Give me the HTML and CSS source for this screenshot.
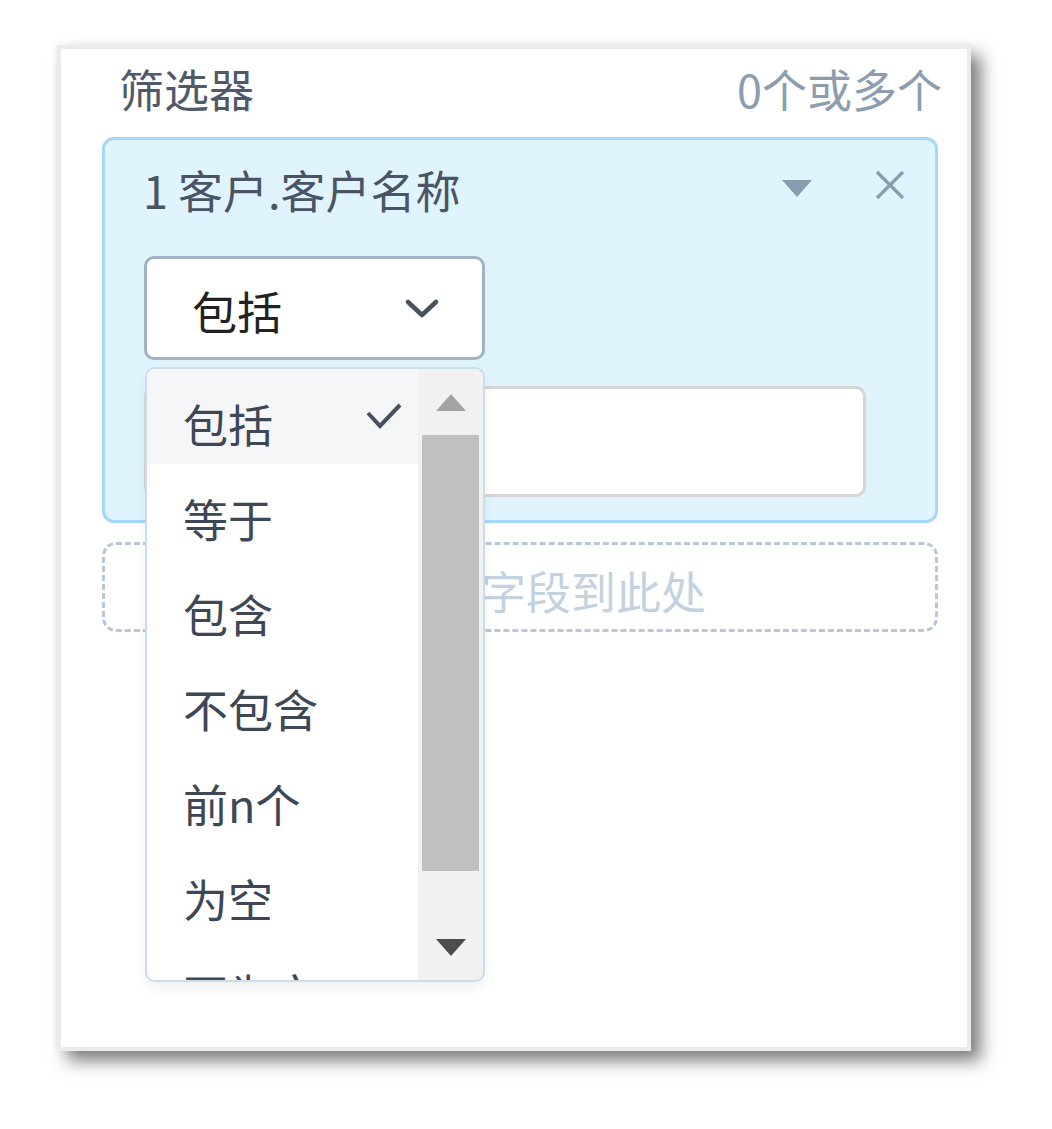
FILE: index.html
```html
<!DOCTYPE html>
<html lang="zh-CN">
<head>
<meta charset="utf-8">
<link rel="stylesheet" href="styles.css">
</head>
<body>
<div class="frame">
  <div class="title-row">
    <span class="title">筛选器</span>
    <span class="count">0个或多个</span>
  </div>
  <div class="card">
    <div class="card-head">
      <span class="field">1 客户.客户名称</span>
      <svg class="caret" width="30" height="17" viewBox="0 0 30 17"><path d="M0 0H30L15 17Z" fill="#8c9cb0"/></svg>
      <svg class="close" width="30" height="30" viewBox="0 0 30 30"><path d="M2 2L28 28M28 2L2 28" stroke="#8c9cb0" stroke-width="3.2" fill="none"/></svg>
    </div>
    <div class="select-wrap">
      <div class="select">
        <span class="select-text">包括</span>
        <svg width="34" height="22" viewBox="0 0 34 22"><path d="M3 4L17 17L31 4" fill="none" stroke="#48515e" stroke-width="4.5" stroke-linecap="round" stroke-linejoin="round"/></svg>
      </div>
      <div class="popup">
        <div class="list">
          <div class="opt active"><span>包括</span><svg width="36" height="27" viewBox="0 0 36 27"><path d="M2 10L14 23L34 2" fill="none" stroke="#48515e" stroke-width="4"/></svg></div>
          <div class="opt"><span>等于</span></div>
          <div class="opt"><span>包含</span></div>
          <div class="opt"><span>不包含</span></div>
          <div class="opt"><span>前n个</span></div>
          <div class="opt"><span>为空</span></div>
          <div class="opt"><span>不为空</span></div>
        </div>
        <div class="sbar">
          <div class="sbtn"><svg width="30" height="17" viewBox="0 0 30 17"><path d="M0 17H30L15 0Z" fill="#a3a3a3"/></svg></div>
          <div class="track"><div class="thumb"></div></div>
          <div class="sbtn"><svg width="30" height="17" viewBox="0 0 30 17"><path d="M0 0H30L15 17Z" fill="#4d4d4d"/></svg></div>
        </div>
      </div>
    </div>
    <div class="input"></div>
  </div>
  <div class="drop">拖拽字段到此处</div>
</div>
</body>
</html>
```
FILE: styles.css
```css
* { box-sizing: border-box; }
html, body { margin: 0; padding: 0; background: #fff; }
body {
  font-family: "Noto Sans CJK SC", "Noto Sans", sans-serif;
  font-size: 45px;
  min-height: 1129px;
  padding: 45px 0 0 57px;
}
.frame {
  width: 914px;
  height: 1006px;
  background: #fff;
  border: 4px solid #ebebeb;
  box-shadow: 10px 10px 16px rgba(0,0,0,0.5), 0 0 6px rgba(0,0,0,0.06);
  padding-top: 12px;
}
.title-row {
  height: 60px;
  margin: 0 25px 0 58px;
  display: flex;
  justify-content: space-between;
  align-items: center;
  line-height: 60px;
}
.title { color: #4f5967; margin-top: -4px; }
.count { color: #8d9db0; margin-top: -4px; }
.card {
  margin: 16px 29px 0 41px;
  background: #dff4fd;
  border: 3px solid #a3d9f5;
  border-radius: 12px;
  padding: 20px 30px 23px 38px;
}
.card-head {
  height: 60px;
  display: flex;
  align-items: center;
  line-height: 60px;
}
.field { color: #4a5464; flex: 1; }
.caret { margin-top: -3px; }
.close { margin-left: 63px; margin-top: -10px; }
.select-wrap {
  position: relative;
  margin-top: 36px;
  margin-left: 1px;
  width: 341px;
}
.select {
  height: 104px;
  background: #fff;
  border: 3px solid #9fb3c6;
  border-radius: 10px;
  display: flex;
  align-items: center;
  justify-content: space-between;
  padding: 0 43px 0 45px;
}
.select-text { color: #222; line-height: 60px; margin-top: 6px; }
.select svg { margin-top: 2px; }
.popup {
  position: absolute;
  top: 111px;
  left: 1px;
  width: 340px;
  height: 615px;
  background: #fff;
  border: 2px solid #ccdcef;
  border-radius: 10px;
  overflow: hidden;
  display: flex;
  z-index: 10;
  box-shadow: 0 6px 12px rgba(0,0,0,0.06);
}
.list { flex: 1; overflow: hidden; }
.opt {
  height: 95px;
  display: flex;
  align-items: center;
  justify-content: space-between;
  padding: 0 16px 0 36px;
  color: #3e4755;
}
.opt span { line-height: 60px; margin-top: 14px; }
.opt.active { background: #f5f6f8; }
.sbar {
  width: 65px;
  background: #f1f1f1;
  display: flex;
  flex-direction: column;
}
.sbtn {
  height: 66px;
  display: flex;
  align-items: center;
  justify-content: center;
}
.track { flex: 1; }
.thumb {
  height: 436px;
  margin: 0 4px;
  background: #c0c0c0;
}
.input {
  margin-top: 26px;
  margin-left: 1px;
  width: 722px;
  height: 111px;
  background: #fff;
  border: 3px solid #d5d5d5;
  border-radius: 10px;
}
.drop {
  margin: 19px 29px 0 41px;
  height: 90px;
  border: 3px dashed #b8c8d8;
  border-radius: 14px;
  color: #c3d2e1;
  display: flex;
  align-items: center;
  padding-left: 286px;
  padding-top: 8px;
  line-height: 60px;
}
```
